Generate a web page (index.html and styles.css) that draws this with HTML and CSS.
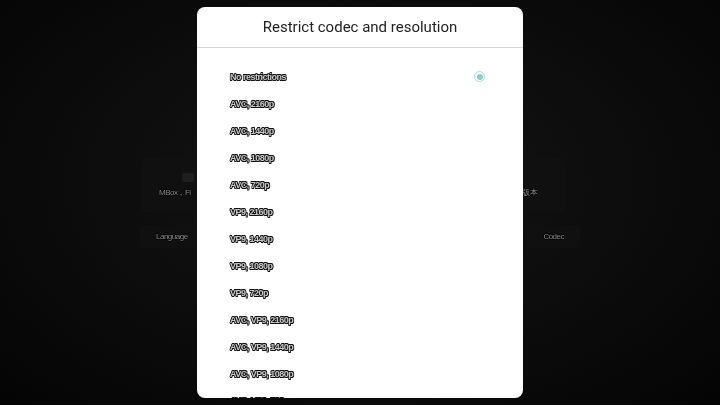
FILE: index.html
```html
<!DOCTYPE html>
<html lang="en">
<head>
  <meta charset="UTF-8" />
  <meta name="viewport" content="width=device-width, initial-scale=1.0"/>
  <title>Restrict codec and resolution</title>
  <link rel="stylesheet" href="styles.css">
</head>
<body>
  <div class="fondo">
    <div class="tarjeta">
      <span class="tarjeta-icono"></span>
      <div class="tarjeta-texto">
        <span class="borde">MBox，Fi</span>
        <span class="borde">版本</span>
      </div>
    </div>
    <div class="fila-botones">
      <span class="boton borde">Language</span>
      <span class="boton borde">Codec</span>
    </div>
  </div>

  <div class="dialogo">
    <div class="dialogo-titulo">Restrict codec and resolution</div>
    <ul class="opciones">
      <li class="opcion"><span class="borde">No restrictions</span><span class="radio activo"></span></li>
      <li class="opcion"><span class="borde">AVC, 2160p</span></li>
      <li class="opcion"><span class="borde">AVC, 1440p</span></li>
      <li class="opcion"><span class="borde">AVC, 1080p</span></li>
      <li class="opcion"><span class="borde">AVC, 720p</span></li>
      <li class="opcion"><span class="borde">VP9, 2160p</span></li>
      <li class="opcion"><span class="borde">VP9, 1440p</span></li>
      <li class="opcion"><span class="borde">VP9, 1080p</span></li>
      <li class="opcion"><span class="borde">VP9, 720p</span></li>
      <li class="opcion"><span class="borde">AVC, VP9, 2160p</span></li>
      <li class="opcion"><span class="borde">AVC, VP9, 1440p</span></li>
      <li class="opcion"><span class="borde">AVC, VP9, 1080p</span></li>
      <li class="opcion"><span class="borde">AVC, VP9, 720p</span></li>
    </ul>
  </div>
</body>
</html>
```

FILE: styles.css
```css
html, body {
  margin: 0;
  height: 100%;
}
body {
  font-family: 'Liberation Sans', Arial, sans-serif;
  background: radial-gradient(ellipse at 50% 45%, #151515 0%, #0c0c0c 55%, #040404 100%);
  overflow: hidden;
  position: relative;
}
.fondo {
  padding: 158px 0 0 140px;
  width: 440px;
  display: flex;
  flex-direction: column;
  gap: 13px;
  will-change: transform;
}
.tarjeta {
  height: 54px;
  width: 423px;
  margin-left: 2px;
  background-color: #101010;
  border-radius: 3px;
  display: flex;
  flex-direction: column;
  justify-content: center;
  gap: 5px;
}
.tarjeta-icono {
  display: block;
  width: 12px;
  height: 9px;
  margin-left: 40px;
  background-color: #1e1e1e;
  border-radius: 2px;
}
.tarjeta-texto {
  display: flex;
  justify-content: space-between;
  padding: 0 28px 0 17px;
  font-size: 8px;
}
.fila-botones {
  display: flex;
  justify-content: space-between;
}
.boton {
  background-color: #101010;
  padding: 7px 16px;
  font-size: 8px;
  border-radius: 3px;
}
.borde {
  color: #c8c8c8;
  letter-spacing: -0.5px;
  text-shadow: 0.7px 0 0 #111, -0.7px 0 0 #111, 0 0.7px 0 #111, 0 -0.7px 0 #111,
    0.6px 0.6px 0 #111, -0.6px -0.6px 0 #111, 0.6px -0.6px 0 #111, -0.6px 0.6px 0 #111;
}
.fondo .borde {
  color: #8a8a8a;
  text-shadow: 0.7px 0 0 #000, -0.7px 0 0 #000, 0 0.7px 0 #000, 0 -0.7px 0 #000;
}
.dialogo {
  position: absolute;
  left: 197px;
  top: 7px;
  width: 326px;
  height: 391px;
  background-color: #ffffff;
  border-radius: 8px;
  overflow: hidden;
  will-change: transform;
}
.dialogo-titulo {
  height: 40px;
  line-height: 40px;
  text-align: center;
  font-family: Roboto, 'Liberation Sans', sans-serif;
  font-size: 15px;
  color: #222;
  border-bottom: 1px solid #d6d6d6;
}
.opciones {
  list-style: none;
  margin: 0;
  padding: 15px 38px 0 33px;
}
.opcion {
  height: 27px;
  display: flex;
  align-items: center;
  justify-content: space-between;
  font-size: 9px;
  font-weight: bold;
}
.radio {
  width: 11px;
  height: 11px;
  border-radius: 50%;
  border: 1px solid #a8ddd6;
  box-sizing: border-box;
  display: flex;
  align-items: center;
  justify-content: center;
}
.radio.activo::after {
  content: "";
  width: 6px;
  height: 6px;
  border-radius: 50%;
  background-color: #86cfc6;
}
```
